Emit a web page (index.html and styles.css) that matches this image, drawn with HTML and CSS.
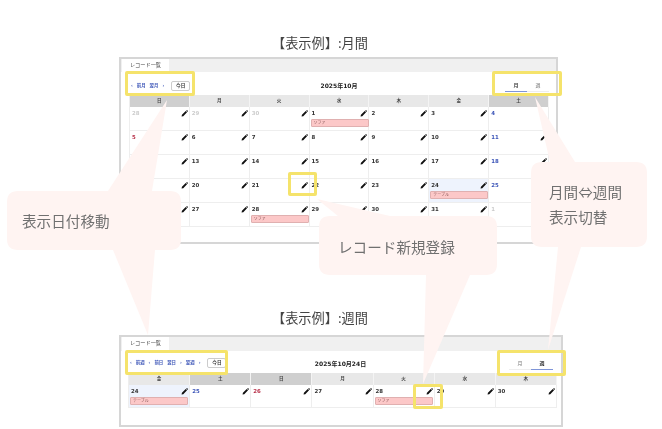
FILE: index.html
```html
<!DOCTYPE html>
<html lang="ja">
<head>
<meta charset="utf-8">
<title>表示例</title>
<link rel="stylesheet" href="styles.css">
</head>
<body>
<svg width="0" height="0" class="defs"><symbol id="pen" viewBox="0 0 8 8"><path d="M0.6 7.4 L1.1 5.5 L5.4 1.2 L6.9 2.7 L2.6 7 Z M5.9 .8 L6.5 .3 Q6.9 0 7.3 .4 L7.7 .8 Q8 1.2 7.7 1.6 L7.3 2.2 Z" fill="#111"/></symbol></svg>
<main class="stage">
  <h2 class="heading first">【表示例】:月間</h2>
  <section class="panel month">
    <div class="tabbar"><span class="tab">レコード一覧</span></div>
    <div class="toolbar">
      <div class="nav"><span class="nav-link">‹</span><span class="nav-link">前月</span><span class="nav-link">翌月</span><span class="nav-link">›</span><span class="today">今日</span></div>
      <div class="period">2025年10月</div>
      <div class="switch"><span class="sw on">月</span><span class="sw">週</span></div>
    </div>
    <div class="grid">
      <div class="dow shade">日</div><div class="dow">月</div><div class="dow">火</div><div class="dow">水</div><div class="dow">木</div><div class="dow">金</div><div class="dow shade">土</div>

      <div class="cell"><span class="d off">28</span><svg class="pen"><use href="#pen"/></svg></div>
      <div class="cell"><span class="d off">29</span><svg class="pen"><use href="#pen"/></svg></div>
      <div class="cell"><span class="d off">30</span><svg class="pen"><use href="#pen"/></svg></div>
      <div class="cell"><span class="d">1</span><svg class="pen"><use href="#pen"/></svg><span class="ev">ソファ</span></div>
      <div class="cell"><span class="d">2</span><svg class="pen"><use href="#pen"/></svg></div>
      <div class="cell"><span class="d">3</span><svg class="pen"><use href="#pen"/></svg></div>
      <div class="cell"><span class="d sat">4</span></div>

      <div class="cell"><span class="d sun">5</span><svg class="pen"><use href="#pen"/></svg></div>
      <div class="cell"><span class="d">6</span><svg class="pen"><use href="#pen"/></svg></div>
      <div class="cell"><span class="d">7</span><svg class="pen"><use href="#pen"/></svg></div>
      <div class="cell"><span class="d">8</span><svg class="pen"><use href="#pen"/></svg></div>
      <div class="cell"><span class="d">9</span><svg class="pen"><use href="#pen"/></svg></div>
      <div class="cell"><span class="d">10</span><svg class="pen"><use href="#pen"/></svg></div>
      <div class="cell"><span class="d sat">11</span><svg class="pen"><use href="#pen"/></svg></div>

      <div class="cell"><span class="d sun">12</span><svg class="pen"><use href="#pen"/></svg></div>
      <div class="cell"><span class="d">13</span><svg class="pen"><use href="#pen"/></svg></div>
      <div class="cell"><span class="d">14</span><svg class="pen"><use href="#pen"/></svg></div>
      <div class="cell"><span class="d">15</span><svg class="pen"><use href="#pen"/></svg></div>
      <div class="cell"><span class="d">16</span><svg class="pen"><use href="#pen"/></svg></div>
      <div class="cell"><span class="d">17</span><svg class="pen"><use href="#pen"/></svg></div>
      <div class="cell"><span class="d sat">18</span><svg class="pen"><use href="#pen"/></svg></div>

      <div class="cell"><span class="d sun">19</span><svg class="pen"><use href="#pen"/></svg></div>
      <div class="cell"><span class="d">20</span><svg class="pen"><use href="#pen"/></svg></div>
      <div class="cell"><span class="d">21</span><svg class="pen"><use href="#pen"/></svg></div>
      <div class="cell"><span class="d">22</span><svg class="pen"><use href="#pen"/></svg></div>
      <div class="cell"><span class="d">23</span><svg class="pen"><use href="#pen"/></svg></div>
      <div class="cell now"><span class="d">24</span><svg class="pen"><use href="#pen"/></svg><span class="ev">テーブル</span></div>
      <div class="cell"><span class="d sat">25</span></div>

      <div class="cell"><span class="d sun">26</span><svg class="pen"><use href="#pen"/></svg></div>
      <div class="cell"><span class="d">27</span><svg class="pen"><use href="#pen"/></svg></div>
      <div class="cell"><span class="d">28</span><svg class="pen"><use href="#pen"/></svg><span class="ev">ソファ</span></div>
      <div class="cell"><span class="d">29</span><svg class="pen"><use href="#pen"/></svg></div>
      <div class="cell"><span class="d">30</span><svg class="pen"><use href="#pen"/></svg></div>
      <div class="cell"><span class="d">31</span><svg class="pen"><use href="#pen"/></svg></div>
      <div class="cell"><span class="d off">1</span></div>
    </div>
  </section>

  <h2 class="heading second">【表示例】:週間</h2>
  <section class="panel week">
    <div class="tabbar"><span class="tab">レコード一覧</span></div>
    <div class="toolbar">
      <div class="nav"><span class="nav-link">‹</span><span class="nav-link">前週</span><span class="nav-link">‹</span><span class="nav-link">前日</span><span class="nav-link">翌日</span><span class="nav-link">›</span><span class="nav-link">翌週</span><span class="nav-link">›</span><span class="today">今日</span></div>
      <div class="period">2025年10月24日</div>
      <div class="switch"><span class="sw">月</span><span class="sw on">週</span></div>
    </div>
    <div class="grid">
      <div class="dow">金</div><div class="dow shade">土</div><div class="dow shade">日</div><div class="dow">月</div><div class="dow">火</div><div class="dow">水</div><div class="dow">木</div>
      <div class="cell now"><span class="d">24</span><svg class="pen"><use href="#pen"/></svg><span class="ev">テーブル</span></div>
      <div class="cell"><span class="d sat">25</span><svg class="pen"><use href="#pen"/></svg></div>
      <div class="cell"><span class="d sun">26</span><svg class="pen"><use href="#pen"/></svg></div>
      <div class="cell"><span class="d">27</span><svg class="pen"><use href="#pen"/></svg></div>
      <div class="cell"><span class="d">28</span><svg class="pen"><use href="#pen"/></svg><span class="ev">ソファ</span></div>
      <div class="cell"><span class="d">29</span><svg class="pen"><use href="#pen"/></svg></div>
      <div class="cell"><span class="d">30</span><svg class="pen"><use href="#pen"/></svg></div>
    </div>
  </section>

  <svg class="bubbles" viewBox="0 0 662 429" aria-hidden="true">
    <path class="bubble" d="M167 100 L152 191 L170 191 Q181 191 181 202 L181 239 Q181 250 170 250 L155 250 L148 335 L113 250 L18 250 Q7 250 7 239 L7 202 Q7 191 18 191 L108 191 Z"/>
    <path class="bubble" d="M317 199 L390 216 L486 216 Q497 216 497 227 L497 264 Q497 275 486 275 L470 275 L423 384 L426 275 L330 275 Q319 275 319 264 L319 227 Q319 216 330 216 L338 216 Z"/>
    <path class="bubble" d="M535 97 L575 162 L636 162 Q647 162 647 173 L647 236 Q647 247 636 247 L581 247 L548 350 L558 247 L542 247 Q531 247 531 236 L531 173 Q531 162 542 162 L550 162 Z"/>
  </svg>
  <p class="note note-a">表示日付移動</p>
  <p class="note note-b">レコード新規登録</p>
  <p class="note note-c">月間⇔週間<br>表示切替</p>

  <div class="mark mark-1"></div>
  <div class="mark mark-2"></div>
  <div class="mark mark-3"></div>
  <div class="mark mark-4"></div>
  <div class="mark mark-5"></div>
  <div class="mark mark-6"></div>
</main>
</body>
</html>
```
FILE: styles.css
```css
* { box-sizing: border-box; }
html, body { margin: 0; padding: 0; background: #fff; }
body { font-family: "DejaVu Sans", "Noto Sans CJK JP", sans-serif; overflow: hidden; }
.defs { position: absolute; }
.stage { position: relative; width: 662px; height: 429px; padding-top: 33px; }

.heading {
  margin: 0 0 0 272px;
  height: 20px;
  font: 400 13.2px/20px "Noto Sans CJK JP", sans-serif;
  color: #444;
  white-space: nowrap;
  filter: blur(.2px);
}
.heading.first { margin-bottom: 4px; }
.heading.second { margin-top: 64px; margin-bottom: 7px; }

.panel {
  margin-left: 119px;
  width: 439px;
  border: 2px solid #d6d6d6;
  background: #fff;
  filter: blur(.3px);
}
.panel.month { height: 187px; padding-bottom: 14px; }
.panel.week { width: 444px; height: 92px; }

.tabbar { height: 13px; background: #f0f0f0; display: flex; padding-left: 1px; }
.week .tabbar { height: 14px; }
.tab {
  width: 47px;
  background: #fff;
  font-size: 5.2px;
  line-height: 13px;
  text-align: center;
  color: #444;
}

.toolbar {
  height: 23px;
  display: grid;
  grid-template-columns: 1fr auto 1fr;
  align-items: center;
  padding: 4px 7px 0 8px;
}
.week .toolbar { height: 22px; padding: 2px 8px 0 7px; }
.nav { display: flex; align-items: center; gap: 4px; padding-left: 2px; }
.nav-link { font-size: 4.4px; line-height: 8px; color: #3d56b8; font-weight: 700; }
.today {
  margin-left: 3px;
  width: 19px;
  height: 10px;
  border: 1px solid #ccc;
  border-radius: 2px;
  font-size: 4.6px;
  font-weight: 700;
  line-height: 8px;
  text-align: center;
  color: #333;
}
.period { font-size: 6px; font-weight: 700; color: #222; }
.switch { display: flex; justify-content: flex-end; align-self: stretch; align-items: flex-end; padding-bottom: 3px; }
.sw {
  width: 22px;
  height: 13px;
  border-bottom: 1px solid #eee;
  font-size: 5px;
  line-height: 13px;
  text-align: center;
  color: #777;
}
.sw.on { border-bottom-color: #7f95d8; color: #333; font-weight: 700; }

.grid {
  margin: 0 7px 0 8px;
  display: grid;
  grid-template-columns: repeat(7, 1fr);
  border-left: 1px solid #eee;
}
.month .grid { grid-template-rows: 12px repeat(5, 24px); }
.week .grid { margin: 0 4px 0 7px; grid-template-rows: 12px 23px; }
.dow {
  background: #e8e8e8;
  font-size: 4.6px;
  font-weight: 700;
  line-height: 12px;
  text-align: center;
  color: #444;
  border-right: 1px solid #f4f4f4;
}
.dow.shade { background: #cfcfcf; }
.cell {
  position: relative;
  display: flex;
  flex-wrap: wrap;
  align-content: flex-start;
  justify-content: space-between;
  padding: 3px 1px 0 2px;
  border-right: 1px solid #eee;
  border-bottom: 1px solid #eee;
}
.cell.now { background: #eef3fd; }
.d { font-size: 5.4px; line-height: 7px; font-weight: 700; color: #333; }
.d.off { color: #ccc; }
.d.sat { color: #3d56b8; }
.d.sun { color: #b8324a; }
.pen { width: 7px; height: 7px; }
.ev {
  height: 8px;
  margin: 2px 0 0 -1px;
  flex: 0 0 58px;
  background: #fcc8c8;
  border: 1px solid #e0b0b0;
  border-radius: 1px;
  font-size: 4px;
  line-height: 6px;
  padding-left: 2px;
  color: #8a5a5a;
}

.bubbles { position: absolute; left: 0; top: 0; width: 662px; height: 429px; }
.bubble { fill: #fff4f2; }
.note {
  position: absolute;
  margin: 0;
  font: 400 14.6px/25px "Noto Sans CJK JP", sans-serif;
  color: #707070;
  white-space: nowrap;
  filter: blur(.2px);
}
.note-a { left: 22px; top: 208px; }
.note-b { left: 338px; top: 234px; }
.note-c { left: 549px; top: 179px; }

.mark {
  position: absolute;
  border: 3px solid #f5e36b;
  border-radius: 2px;
}
.mark-1 { left: 125px; top: 71px; width: 70px; height: 25px; }
.mark-2 { left: 492px; top: 71px; width: 70px; height: 25px; }
.mark-3 { left: 288px; top: 172px; width: 29px; height: 24px; }
.mark-4 { left: 125px; top: 350px; width: 103px; height: 25px; }
.mark-5 { left: 497px; top: 350px; width: 69px; height: 26px; }
.mark-6 { left: 413px; top: 384px; width: 30px; height: 25px; }
```
